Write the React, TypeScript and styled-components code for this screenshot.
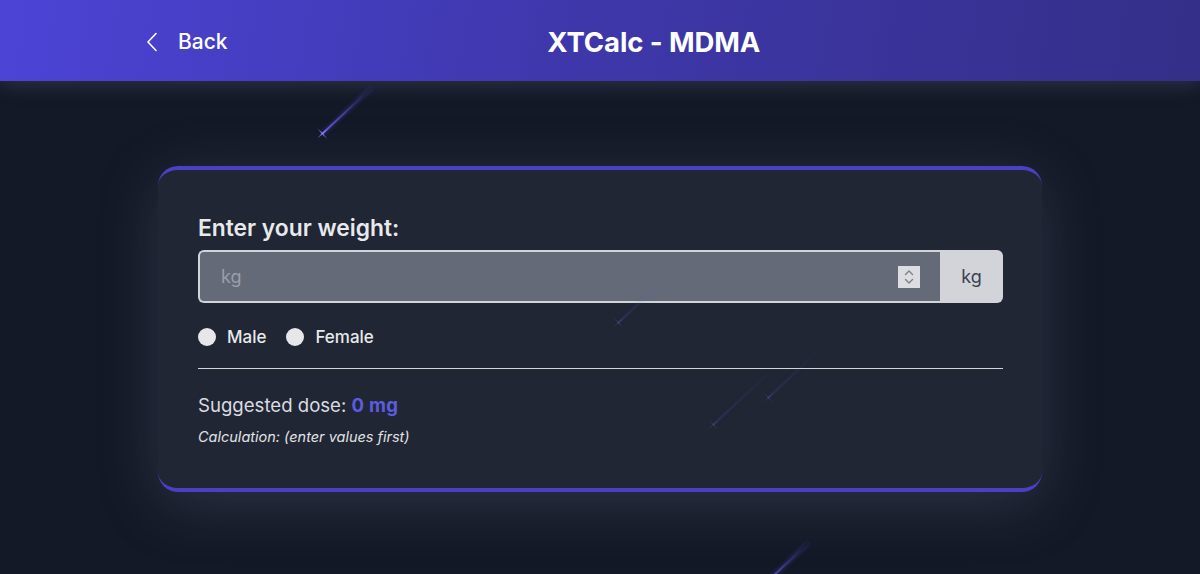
import React from "react";
import styled, { createGlobalStyle } from "styled-components";

const Global = createGlobalStyle`
  html, body { margin: 0; padding: 0; }
  body {
    background: #131927;
    font-family: Inter, "Noto Sans", "Liberation Sans", sans-serif;
    color: #e5e7eb;
    overflow: hidden;
  }
  * { box-sizing: border-box; }
`;

const Page = styled.div`
  position: relative;
  width: 1200px;
  height: 574px;
  overflow: hidden;
  background: #131927;
`;

const Header = styled.header`
  position: relative;
  z-index: 2;
  height: 81px;
  display: flex;
  align-items: center;
  padding: 2px 128px 0 145px;
  background: linear-gradient(100deg, #4c44d6 0%, #3f38ad 45%, #342f88 100%);
  box-shadow: 0 4px 18px rgba(120, 130, 160, 0.25);
`;

const BackButton = styled.button`
  display: flex;
  align-items: center;
  gap: 19px;
  background: none;
  border: none;
  padding: 0;
  color: #ffffff;
  font-family: inherit;
  font-size: 21px;
  font-weight: 500;
  cursor: pointer;
`;

const Title = styled.h1`
  flex: 1;
  margin: 0 0 0 8px;
  text-align: center;
  color: #ffffff;
  font-size: 27.5px;
  font-weight: 700;
  letter-spacing: -0.1px;
`;

const Main = styled.main`
  position: relative;
  z-index: 1;
  display: flex;
  justify-content: center;
  padding-top: 85px;
`;

const Card = styled.section`
  width: 884px;
  border-radius: 20px;
  background: rgba(33, 39, 52, 0.96);
  border-top: 4px solid #4a40c4;
  border-bottom: 4px solid #4a40c4;
  padding: 44px 39px 43px 40px;
  box-shadow: 0 12px 60px rgba(110, 118, 140, 0.28);
`;

const Label = styled.label`
  display: block;
  font-size: 22.8px;
  font-weight: 600;
  color: #e8e9ec;
  margin-bottom: 9px;
`;

const InputGroup = styled.div`
  display: flex;
  height: 53px;
`;

const InputField = styled.div`
  flex: 1;
  display: flex;
  align-items: center;
  background: #646a78;
  border: 2px solid #d2d4da;
  border-right: none;
  border-radius: 6px 0 0 6px;
  padding: 0 20px 0 19px;
`;

const Input = styled.input`
  flex: 1;
  background: transparent;
  border: none;
  outline: none;
  color: #f3f4f6;
  font-family: inherit;
  font-size: 18px;
  &::placeholder { color: #9a9fa9; }
`;

const Spinner = styled.div`
  width: 22px;
  height: 22px;
  background: #dcdde1;
  display: flex;
  align-items: center;
  justify-content: center;
`;

const Addon = styled.span`
  width: 63px;
  display: flex;
  align-items: center;
  justify-content: center;
  background: #d2d4da;
  color: #3b4150;
  font-size: 18px;
  border-radius: 0 6px 6px 0;
`;

const RadioRow = styled.div`
  display: flex;
  align-items: center;
  gap: 20px;
  margin-top: 24px;
`;

const RadioLabel = styled.label`
  display: flex;
  align-items: center;
  gap: 11px;
  font-size: 17px;
  font-weight: 500;
  color: #e8e9ec;
`;

const RadioDot = styled.span`
  width: 18px;
  height: 18px;
  border-radius: 50%;
  background: #e7e7ea;
  display: inline-block;
`;

const Divider = styled.hr`
  border: none;
  border-top: 1px solid #d4d6db;
  margin: 21px 0 25px;
`;

const Dose = styled.p`
  margin: 0;
  font-size: 18.6px;
  color: #dadce1;
`;

const DoseValue = styled.strong`
  color: #5b5ce0;
  font-weight: 700;
  letter-spacing: 0.3px;
`;

const Calc = styled.p`
  margin: 12px 0 0;
  font-size: 14.5px;
  font-style: italic;
  color: #e0e2e6;
`;

const Star = styled.div<{ $len: number; $op: number }>`
  position: absolute;
  width: ${(p) => p.$len}px;
  height: 2px;
  transform-origin: 0 50%;
  transform: rotate(-43deg);
  background: linear-gradient(90deg, rgba(110, 100, 255, ${(p) => p.$op}) 0%, rgba(90, 80, 230, 0) 100%);
  box-shadow: 0 0 4px rgba(100, 90, 255, ${(p) => p.$op * 0.5});
  pointer-events: none;
  &::before, &::after {
    content: "";
    position: absolute;
    left: -7px;
    top: 0;
    width: 15px;
    height: 2px;
    background: radial-gradient(closest-side, rgba(150, 140, 255, ${(p) => p.$op}), rgba(100, 90, 255, 0));
  }
  &::after { transform: rotate(90deg); }
`;

const stars = [
  { x: 322, y: 133, len: 68, op: 0.9, z: 3 },
  { x: 618, y: 322, len: 60, op: 0.18, z: 2 },
  { x: 713, y: 424, len: 80, op: 0.16, z: 2 },
  { x: 768, y: 397, len: 70, op: 0.16, z: 2 },
  { x: 757, y: 590, len: 70, op: 0.9, z: 0 },
  { x: 165, y: 412, len: 20, op: 0.2, z: 0 },
];

export default function App() {
  return (
    <Page>
      <Global />
      <Header>
        <BackButton>
          <svg width="14" height="20" viewBox="0 0 14 20" fill="none">
            <polyline points="11,1.5 3,10 11,18.5" stroke="#ffffff" strokeWidth="1.6" strokeLinecap="round" strokeLinejoin="round" />
          </svg>
          Back
        </BackButton>
        <Title>XTCalc - MDMA</Title>
      </Header>
      <Main>
        <Card>
          <Label htmlFor="weight">Enter your weight:</Label>
          <InputGroup>
            <InputField>
              <Input id="weight" type="text" placeholder="kg" />
              <Spinner>
                <svg width="12" height="18" viewBox="0 0 12 18" fill="none">
                  <polyline points="2.5,6.5 6,3 9.5,6.5" stroke="#7b808b" strokeWidth="1.4" strokeLinecap="round" strokeLinejoin="round" />
                  <polyline points="2.5,11.5 6,15 9.5,11.5" stroke="#7b808b" strokeWidth="1.4" strokeLinecap="round" strokeLinejoin="round" />
                </svg>
              </Spinner>
            </InputField>
            <Addon>kg</Addon>
          </InputGroup>
          <RadioRow>
            <RadioLabel><RadioDot />Male</RadioLabel>
            <RadioLabel><RadioDot />Female</RadioLabel>
          </RadioRow>
          <Divider />
          <Dose>
            Suggested dose: <DoseValue>0 mg</DoseValue>
          </Dose>
          <Calc>Calculation: (enter values first)</Calc>
        </Card>
      </Main>
      {stars.map((s, i) => (
        <Star key={i} $len={s.len} $op={s.op} style={{ left: s.x, top: s.y, zIndex: s.z }} />
      ))}
    </Page>
  );
}
